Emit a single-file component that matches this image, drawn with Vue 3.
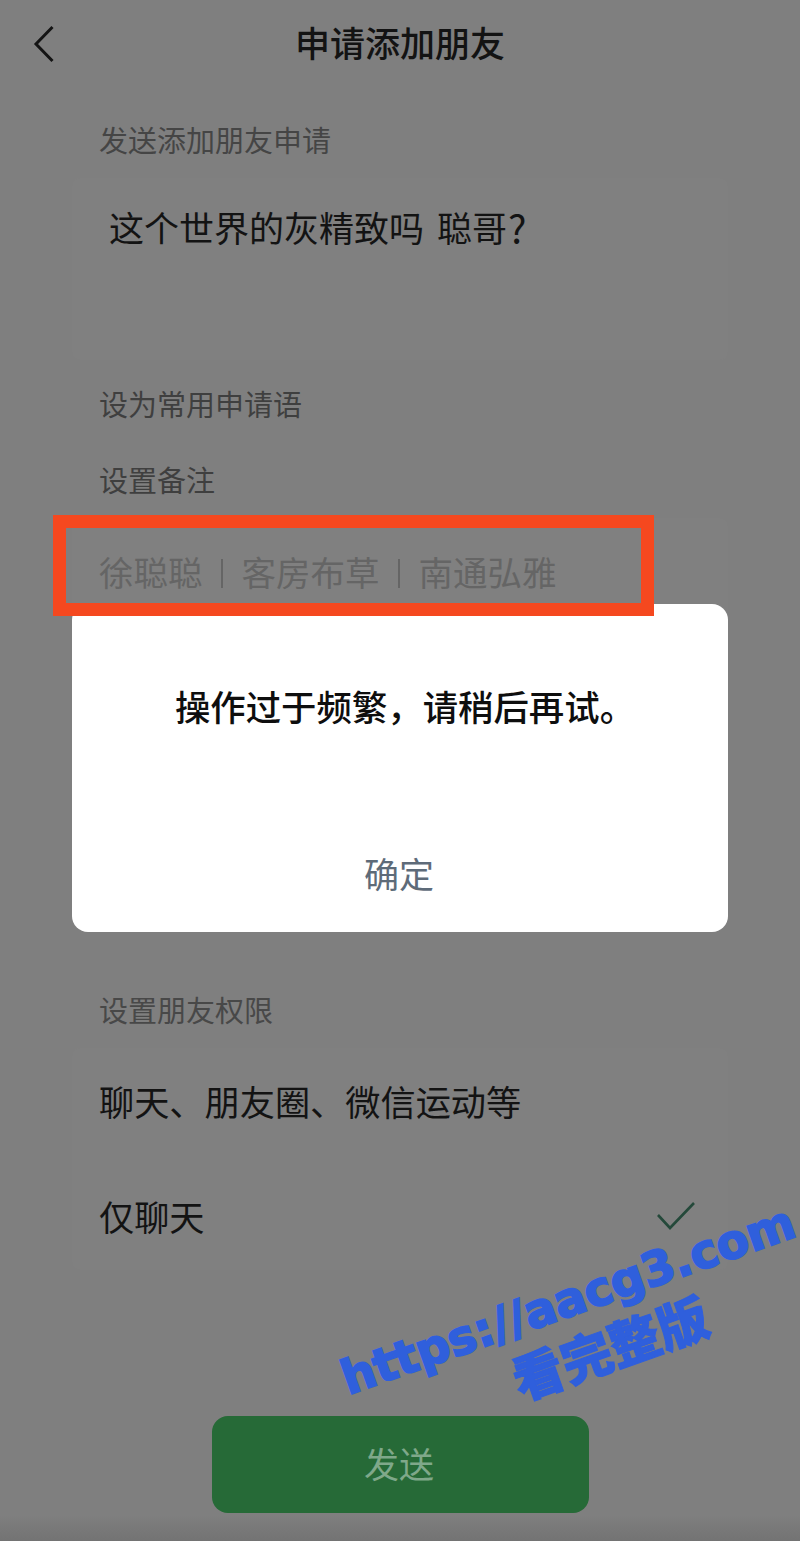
<script setup>
const watermarkUrl = 'https://aacg3.com'
const watermarkText = '看完整版'
const noteParts = ['徐聪聪', '客房布草', '南通弘雅']
</script>

<template>
  <div class="page">
    <header class="nav">
      <svg class="back" viewBox="0 0 24 40" width="24" height="40" aria-hidden="true">
        <path d="M20.5 3 L4 20 L20.5 37" fill="none" stroke="#141414" stroke-width="3" />
      </svg>
      <h1 class="title">申请添加朋友</h1>
    </header>

    <main class="content">
      <p class="label first">发送添加朋友申请</p>
      <div class="card message">这个世界的灰精致吗<span class="gap"></span>聪哥<span class="qm">?</span></div>
      <p class="label common">设为常用申请语</p>
      <p class="label note-label">设置备注</p>
      <div class="card note">
        <template v-for="(part, i) in noteParts" :key="part">
          <span v-if="i" class="bar"></span>
          <span>{{ part }}</span>
        </template>
      </div>

      <div class="spacer"></div>

      <p class="label perm-label">设置朋友权限</p>
      <div class="card perms">
        <div class="row">聊天、朋友圈、微信运动等</div>
        <div class="row">
          <span>仅聊天</span>
          <svg class="check" viewBox="0 0 38 28" width="38" height="28" aria-hidden="true">
            <path d="M1 13 L13 26 L37 1" fill="none" stroke="#24493a" stroke-width="2.6" />
          </svg>
        </div>
      </div>

      <div class="actions">
        <button class="send" type="button">发送</button>
      </div>
    </main>

    <div class="highlight"></div>

    <section class="dialog">
      <p class="dialog-text">操作过于频繁，请稍后再试。</p>
      <p class="dialog-ok">确定</p>
    </section>

    <div class="watermark">
      <div class="wm-url">{{ watermarkUrl }}</div>
      <div class="wm-text">{{ watermarkText }}</div>
    </div>
  </div>
</template>

<style>
html, body { margin: 0; padding: 0; background: #7f7f7f; }
</style>

<style scoped>
.page {
  position: relative;
  width: 800px;
  height: 1541px;
  overflow: hidden;
  background: linear-gradient(to bottom, #7f7f7f 0, #7f7f7f 1515px, #737373 1541px);
  font-family: "Noto Sans CJK SC", "Noto Sans", sans-serif;
  color: #131313;
}
.nav {
  position: relative;
  height: 88px;
  display: flex;
  align-items: center;
  justify-content: center;
}
.back { position: absolute; left: 32px; top: 24px; }
.title { margin: 0 0 4px; font-size: 35px; line-height: 48px; font-weight: 500; }
.content { display: flex; flex-direction: column; }
.label {
  margin: 0 0 0 99px;
  font-size: 29px;
  line-height: 40px;
  color: #454545;
}
.first { margin-top: 31px; }
.card {
  margin: 0 72px;
  background: #808080;
  border-radius: 8px;
}
.message {
  margin-top: 19px;
  height: 182px;
  box-sizing: border-box;
  padding: 24px 37px;
  font-size: 35px;
  line-height: 50px;
  display: flex;
}
.gap { width: 13px; }
.qm { font-size: 39px; margin-left: 1px; }
.common { margin-top: 23px; color: #3f3f3f; }
.note-label { margin-top: 36px; color: #3f3f3f; }
.note {
  margin-top: 19px;
  height: 112px;
  box-sizing: border-box;
  padding: 25px 27px 31px;
  font-size: 34.5px;
  line-height: 50px;
  color: #656565;
  white-space: nowrap;
  display: flex;
  align-items: center;
}
.bar { width: 2px; height: 29px; margin: 4px 18.5px 0; background: #656565; }
.spacer { height: 359px; }
.perm-label { color: #484848; }
.perms {
  margin-top: 19px;
  height: 222px;
  padding: 0 27px;
  display: flex;
  flex-direction: column;
  gap: 9px;
}
.row {
  height: 109px;
  display: flex;
  align-items: center;
  justify-content: space-between;
  font-size: 35.2px;
}
.perms .row:first-child { height: 104px; }
.check { margin-right: 6px; }
.actions { margin-top: 146px; display: flex; justify-content: center; }
.send {
  width: 377px;
  height: 97px;
  padding: 0 2px 4px 0;
  border: 0;
  border-radius: 16px;
  background: #266a37;
  color: #7fa88a;
  font-family: inherit;
  font-size: 35px;
}
.highlight {
  position: absolute;
  left: 53px;
  top: 515px;
  width: 601px;
  height: 101px;
  box-sizing: border-box;
  border: 13.5px solid #f5481f;
  z-index: 3;
}
.dialog {
  position: absolute;
  left: 72px;
  top: 604px;
  width: 656px;
  height: 328px;
  background: #fff;
  border-radius: 16px;
  text-align: center;
  z-index: 2;
}
.dialog-text {
  margin: 77px 0 0;
  padding-left: 10px;
  font-size: 35.4px;
  line-height: 50px;
  font-weight: 500;
  color: #0e0e0e;
  white-space: nowrap;
}
.dialog-ok {
  margin: 117px 0 0;
  padding-right: 2px;
  font-size: 35px;
  line-height: 50px;
  color: #5e6b79;
}
.watermark {
  position: absolute;
  left: 335px;
  top: 1278px;
  width: 480px;
  text-align: center;
  transform-origin: 240px 42px;
  transform: rotate(-19.5deg);
  color: #2f5fdc;
  z-index: 4;
  font-family: "DejaVu Sans", sans-serif;
  font-weight: 700;
}
.wm-url {
  font-size: 47px;
  line-height: 42px;
  white-space: nowrap;
  -webkit-text-stroke: 2px #2f5fdc;
}
.wm-text {
  margin-top: 15px;
  padding-left: 48px;
  font-family: "Noto Sans CJK SC", sans-serif;
  font-weight: 900;
  font-size: 51px;
  line-height: 42px;
  -webkit-text-stroke: 1px #2f5fdc;
}
</style>
